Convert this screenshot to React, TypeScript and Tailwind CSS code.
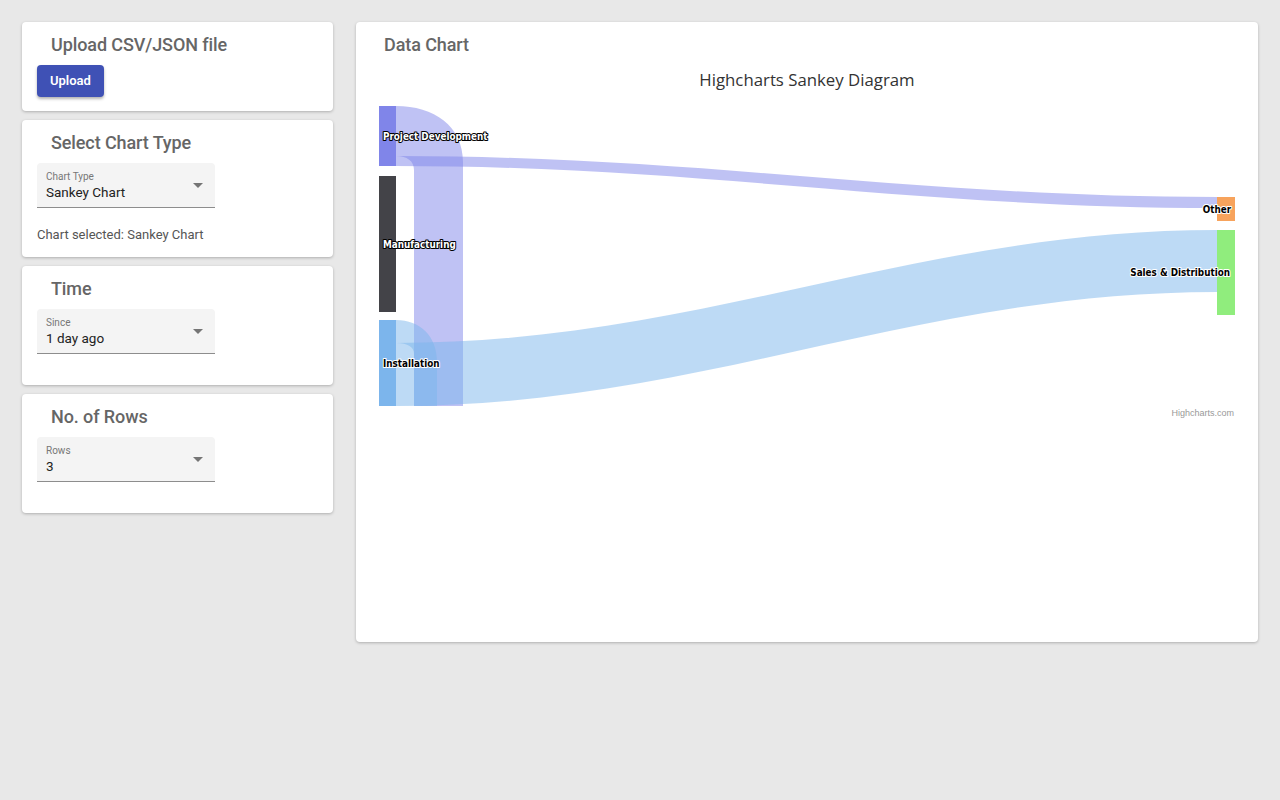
import React from 'react';

const roboto = { fontFamily: 'Roboto, "Liberation Sans", sans-serif' };

const CardTitle: React.FC<{ children: React.ReactNode }> = ({ children }) => (
  <h2 className="ml-[14px] text-[18px] leading-[24px] font-medium text-[#666] tracking-[-0.1px]">{children}</h2>
);

const FilledSelect: React.FC<{ label: string; value: string }> = ({ label, value }) => (
  <div className="relative w-[178px] h-[45px] bg-[#f4f4f4] rounded-t border-b border-[#8d8d8d] pl-[9px] pt-[8px]">
    <div className="text-[10px] leading-[12px] text-[#777]">{label}</div>
    <div className="text-[13.5px] leading-[18px] text-[#222]">{value}</div>
    <svg className="absolute right-[5px] top-[10px]" width="24" height="24" viewBox="0 0 24 24">
      <path d="M7 10l5 5 5-5z" fill="#757575" />
    </svg>
  </div>
);

const SankeyChart: React.FC = () => {
  const outline = (fill: string, stroke: string) => ({
    fill,
    stroke,
    strokeWidth: 2,
    paintOrder: 'stroke' as const,
    strokeLinejoin: 'round' as const,
  });
  return (
    <svg width="874" height="360" viewBox="370 62 874 360" className="block">
      <text x="807" y="86" textAnchor="middle" fontSize="16.8" fill="#333" fontFamily='"Open Sans", "DejaVu Sans", sans-serif'>
        Highcharts Sankey Diagram
      </text>

      {/* links */}
      <path
        d="M396,106 C434,106 463,126 463,162 L463,406 L414,406 L414,170 C414,161 407,156 396,156 Z"
        fill="#8085e9"
        fillOpacity="0.5"
      />
      <path
        d="M396,156 C700,156 913,197 1217,197 L1217,208 C913,208 700,166 396,166 Z"
        fill="#8085e9"
        fillOpacity="0.5"
      />
      <path
        d="M396,320 C420,320 437,336 437,362 L437,406 L414,406 L414,354 C414,347 408,343 396,343 Z"
        fill="#7cb5ec"
        fillOpacity="0.5"
      />
      <path
        d="M396,343 C700,343 913,230 1217,230 L1217,292 C913,292 700,406 396,406 Z"
        fill="#7cb5ec"
        fillOpacity="0.5"
      />

      {/* nodes */}
      <rect x="379" y="106" width="17" height="60" fill="#8085e9" />
      <rect x="379" y="176" width="17" height="136" fill="#434348" />
      <rect x="379" y="320" width="17" height="86" fill="#7cb5ec" />
      <rect x="1217" y="197" width="18" height="24" fill="#f7a35c" />
      <rect x="1217" y="230" width="18" height="85" fill="#90ed7d" />

      <g fontSize="9.8" fontWeight="bold" fontFamily='"DejaVu Sans Condensed", "Liberation Sans", sans-serif'>
        <text x="383" y="140" style={outline('#fff', '#000')}>Project Development</text>
        <text x="383" y="248" style={outline('#fff', '#000')}>Manufacturing</text>
        <text x="383" y="367" style={outline('#000', '#fff')}>Installation</text>
        <text x="1231" y="213" textAnchor="end" style={outline('#000', '#fff')}>Other</text>
        <text x="1230" y="276" textAnchor="end" style={outline('#000', '#fff')}>Sales &amp; Distribution</text>
      </g>

      <text x="1234" y="416" textAnchor="end" fontSize="9" fill="#999" fontFamily='"Liberation Sans", sans-serif'>
        Highcharts.com
      </text>
    </svg>
  );
};

const App: React.FC = () => {
  return (
    <div className="min-h-[800px] w-full bg-[#e8e8e8]" style={roboto}>
      <div className="flex items-start gap-[23px] p-[22px]">
        <div className="w-[311px] flex flex-col gap-[9px]">
          <div className="bg-white rounded shadow-[0_1px_3px_rgba(0,0,0,0.25)] px-[15px] pt-[11px] pb-[14px]">
            <CardTitle>Upload CSV/JSON file</CardTitle>
            <button className="mt-[8px] h-[32px] px-[13px] rounded bg-[#3f51b5] text-white text-[13px] font-semibold shadow-[0_2px_3px_rgba(0,0,0,0.3)]">
              Upload
            </button>
          </div>

          <div className="bg-white rounded shadow-[0_1px_3px_rgba(0,0,0,0.25)] px-[15px] pt-[11px] pb-[13px]">
            <CardTitle>Select Chart Type</CardTitle>
            <div className="mt-[8px]">
              <FilledSelect label="Chart Type" value="Sankey Chart" />
            </div>
            <p className="mt-[16px] pt-[1px] text-[13px] leading-[19px] text-[#555]">Chart selected: Sankey Chart</p>
          </div>

          <div className="bg-white rounded shadow-[0_1px_3px_rgba(0,0,0,0.25)] px-[15px] pt-[11px] pb-[31px]">
            <CardTitle>Time</CardTitle>
            <div className="mt-[8px]">
              <FilledSelect label="Since" value="1 day ago" />
            </div>
          </div>

          <div className="bg-white rounded shadow-[0_1px_3px_rgba(0,0,0,0.25)] px-[15px] pt-[11px] pb-[31px]">
            <CardTitle>No. of Rows</CardTitle>
            <div className="mt-[8px]">
              <FilledSelect label="Rows" value="3" />
            </div>
          </div>
        </div>

        <div className="flex-1 h-[620px] bg-white rounded shadow-[0_1px_3px_rgba(0,0,0,0.25)] pt-[11px] px-[14px]">
          <CardTitle>Data Chart</CardTitle>
          <div className="mt-[5px]">
            <SankeyChart />
          </div>
        </div>
      </div>
    </div>
  );
};

export default App;
